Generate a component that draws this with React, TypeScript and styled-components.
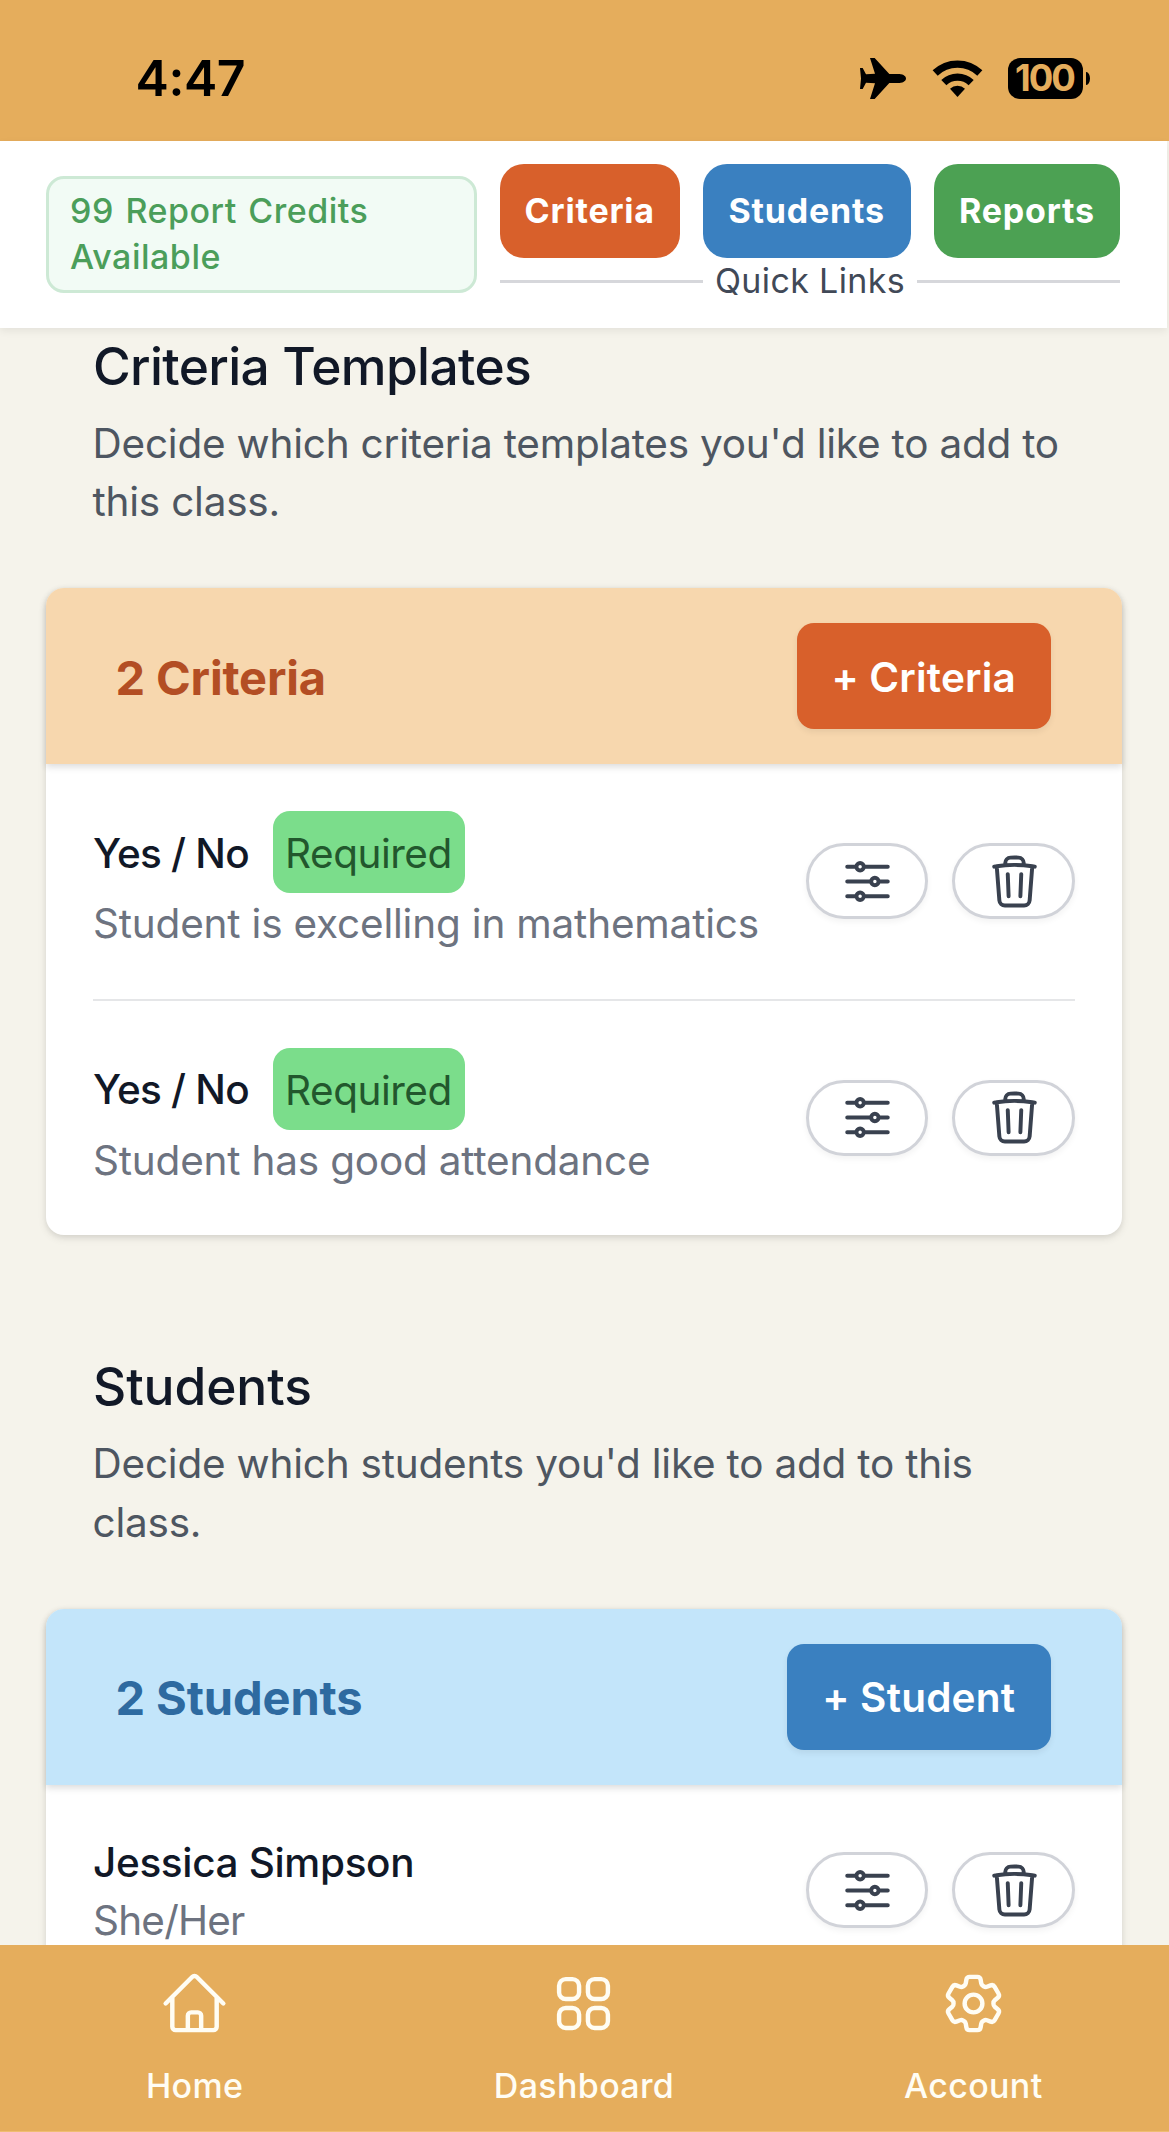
import React from "react";
import styled, { createGlobalStyle } from "styled-components";
import {
  HiOutlineAdjustmentsHorizontal,
  HiOutlineCog6Tooth,
  HiOutlineHome,
  HiOutlineSquares2X2,
  HiOutlineTrash,
} from "react-icons/hi2";

const GlobalStyle = createGlobalStyle`
  *, *::before, *::after { box-sizing: border-box; }
  body {
    margin: 0;
    background: #f5f3eb;
    font-family: Inter, "Liberation Sans", sans-serif;
    font-size: 40.5px;
  }
  h2, h3, p { margin: 0; }
  button { font-family: inherit; border: 0; padding: 0; }
`;

const Screen = styled.div`
  display: flex;
  flex-direction: column;
  width: 1169px;
  height: 2132px;
  overflow: hidden;
`;

const StatusBar = styled.div`
  flex: none;
  height: 141px;
  padding: 15px 79px 0 135.5px;
  display: flex;
  align-items: center;
  justify-content: space-between;
  background: #e5ad5c;
`;

const Clock = styled.span`
  font-size: 50px;
  font-weight: 600;
  letter-spacing: -0.4px;
  color: #000;
`;

const StatusIcons = styled.div`
  display: flex;
  align-items: center;
`;

const PlaneIcon = styled.svg`
  width: 46px;
  height: 41px;
  margin-right: 26px;
`;

const WifiIcon = styled.svg`
  width: 51px;
  height: 37px;
  margin-right: 25px;
`;

const Battery = styled.div`
  width: 75px;
  height: 41px;
  border-radius: 12px;
  background: #000;
  color: #e5ad5c;
  font-size: 36.5px;
  font-weight: 700;
  letter-spacing: -2px;
  line-height: 41px;
  text-align: center;
  text-indent: -2px;
`;

const BatteryNub = styled.div`
  width: 4px;
  height: 13px;
  margin-left: 3px;
  border-radius: 0 4px 4px 0 / 0 7px 7px 0;
  background: #000;
`;

const Header = styled.header`
  flex: none;
  position: relative;
  z-index: 1;
  height: 186.5px;
  margin-right: 2px;
  padding: 0 47px 0 46px;
  display: flex;
  align-items: center;
  gap: 23.5px;
  background: #fff;
  box-shadow: 0 3px 8px rgba(0, 0, 0, 0.07);
`;

const Credits = styled.div`
  flex: 1;
  height: 117.5px;
  padding: 9px 21px;
  border: 3px solid #cde9d5;
  border-radius: 18px;
  background: #f2fbf5;
  color: #4b9e5a;
  font-size: 34px;
  font-weight: 500;
  letter-spacing: 0.5px;
  word-spacing: 2px;
  line-height: 46.7px;
`;

const Links = styled.div`
  width: 620px;
`;

const LinkButtons = styled.div`
  display: flex;
  justify-content: space-between;
`;

const LinkButton = styled.button<{ $width: number; $color: string }>`
  width: ${(p) => p.$width}px;
  height: 94px;
  border-radius: 24px;
  background: ${(p) => p.$color};
  color: #fff;
  font-size: 34px;
  font-weight: 700;
  letter-spacing: 0.8px;
`;

const LinksCaption = styled.div`
  height: 47px;
  display: flex;
  align-items: center;
  gap: 12px;
  color: #414957;
  font-size: 34px;
  letter-spacing: 0.35px;
  white-space: nowrap;

  &::before,
  &::after {
    content: "";
    flex: 1;
    height: 3px;
    background: #d6d7db;
  }

  span {
    height: 47px;
    line-height: 45px;
  }
`;

const Main = styled.main`
  flex: 1;
  min-height: 0;
  overflow: hidden;
  padding: 10px 47.5px 0 46px;
`;

const Section = styled.section`
  margin-bottom: 123px;
`;

const Title = styled.h2<{ $tracking: number }>`
  padding-left: 47px;
  color: #111827;
  font-size: 51.5px;
  font-weight: 500;
  letter-spacing: ${(p) => p.$tracking}px;
  line-height: 56px;
`;

const Description = styled.p`
  margin: 21px 0 56.5px;
  padding: 0 40px 0 46.5px;
  color: #4e5661;
  letter-spacing: -0.22px;
  line-height: 58.7px;
`;

const Card = styled.div`
  border-radius: 18px;
  background: #fff;
  box-shadow: 0 3px 9px rgba(0, 0, 0, 0.1), 0 2px 5px rgba(0, 0, 0, 0.05);
`;

const CardHeader = styled.div<{ $background: string; $color: string }>`
  height: 175.5px;
  padding: 0 70.5px 0 69.5px;
  display: flex;
  align-items: center;
  justify-content: space-between;
  border-radius: 18px 18px 0 0;
  background: ${(p) => p.$background};
  color: ${(p) => p.$color};
  box-shadow: 0 3px 7px rgba(0, 0, 0, 0.14);
`;

const CardTitle = styled.h3<{ $tracking: number }>`
  padding-top: 2px;
  font-size: 47px;
  font-weight: 700;
  letter-spacing: ${(p) => p.$tracking}px;
`;

const AddButton = styled.button<{ $width: number; $color: string }>`
  width: ${(p) => p.$width}px;
  height: 105.5px;
  padding-top: 2px;
  border-radius: 17px;
  background: ${(p) => p.$color};
  color: #fff;
  font-size: 40.5px;
  font-weight: 600;
  letter-spacing: 0.2px;
  box-shadow: 0 3px 6px rgba(0, 0, 0, 0.07);
`;

const Rows = styled.div`
  padding: 0 47px;
`;

const Row = styled.div`
  padding: 47px 0;
  display: flex;
  align-items: center;
  justify-content: space-between;

  & + & {
    border-top: 2.7px solid #e5e6e8;
  }
`;

const RowHead = styled.div`
  display: flex;
  align-items: center;
  gap: 24px;
`;

const RowName = styled.span<{ $tracking: number }>`
  height: 58.6px;
  color: #111827;
  font-weight: 500;
  letter-spacing: ${(p) => p.$tracking}px;
  line-height: 61.6px;
`;

const RowDetail = styled.p<{ $tracking: number }>`
  height: 58.6px;
  color: #6d7380;
  letter-spacing: ${(p) => p.$tracking}px;
  line-height: 61.6px;
  white-space: nowrap;
`;

const Badge = styled.span`
  width: 192px;
  height: 82px;
  border-radius: 17px;
  background: #7bdd8b;
  color: #22572d;
  letter-spacing: -0.5px;
  line-height: 85px;
  text-align: center;
  text-indent: -1px;
`;

const Actions = styled.div`
  display: flex;
  gap: 24px;
`;

const ActionButton = styled.button`
  width: 122.5px;
  height: 76px;
  display: flex;
  align-items: center;
  justify-content: center;
  padding-left: 2px;
  border: 3px solid #d1d3d9;
  border-radius: 38px;
  background: #fff;
  color: #39414f;
  box-shadow: 0 3px 6px rgba(0, 0, 0, 0.05);

  svg {
    stroke-width: 1.6;
  }
`;

const Nav = styled.nav`
  flex: none;
  height: 187px;
  padding: 22.5px 1px 0 0;
  display: grid;
  grid-template-columns: repeat(3, 1fr);
  border-bottom: 1px solid #f0bd72;
  background: #e5ad5c;
`;

const NavItem = styled.a`
  display: flex;
  flex-direction: column;
  align-items: center;
  gap: 23px;
  color: #fffdf4;
  font-size: 34px;
  font-weight: 500;
  letter-spacing: 0.35px;
  line-height: 47px;
`;

function RowActions() {
  return (
    <Actions>
      <ActionButton aria-label="Edit">
        <HiOutlineAdjustmentsHorizontal size={59} />
      </ActionButton>
      <ActionButton aria-label="Delete">
        <HiOutlineTrash size={59} />
      </ActionButton>
    </Actions>
  );
}

const criteria = ["Student is excelling in mathematics", "Student has good attendance"];
const students = [{ name: "Jessica Simpson", pronouns: "She/Her" }];

export default function App() {
  return (
    <Screen>
      <GlobalStyle />
      <StatusBar>
        <Clock>4:47</Clock>
        <StatusIcons>
          <PlaneIcon viewBox="0 0 138 123">
            <path d="M0 30H8L18 49L45 47L30 0H44L88 48H118C132 49 138 56 138 61.500C138 67 132 74 118 75H88L44 123H30L45 76L18 74L8 93H0L3 61.500Z" />
          </PlaneIcon>
          <WifiIcon viewBox="0 0 150 111" fill="none" stroke="#000" strokeWidth="22">
            <path d="M8 39A97 97 0 0 1 142 39M34 68A59 59 0 0 1 116 68" />
            <path d="M75 111L52.500 86A33 33 0 0 1 97.500 86Z" fill="#000" stroke="none" />
          </WifiIcon>
          <Battery>100</Battery>
          <BatteryNub />
        </StatusIcons>
      </StatusBar>

      <Header>
        <Credits>99 Report Credits Available</Credits>
        <Links>
          <LinkButtons>
            <LinkButton $width={179.5} $color="#d8602b">Criteria</LinkButton>
            <LinkButton $width={208} $color="#3a80c0">Students</LinkButton>
            <LinkButton $width={186} $color="#4ca153">Reports</LinkButton>
          </LinkButtons>
          <LinksCaption>
            <span>Quick Links</span>
          </LinksCaption>
        </Links>
      </Header>

      <Main>
        <Section>
          <Title $tracking={-0.65}>Criteria Templates</Title>
          <Description>
            Decide which criteria templates you'd like to add to this class.
          </Description>
          <Card>
            <CardHeader $background="#f7d7ae" $color="#b34e24">
              <CardTitle $tracking={-0.15}>2 Criteria</CardTitle>
              <AddButton $width={254.5} $color="#d8602b">+ Criteria</AddButton>
            </CardHeader>
            <Rows>
              {criteria.map((text) => (
                <Row key={text}>
                  <div>
                    <RowHead>
                      <RowName $tracking={-0.75}>Yes / No</RowName>
                      <Badge>Required</Badge>
                    </RowHead>
                    <RowDetail $tracking={-0.2}>{text}</RowDetail>
                  </div>
                  <RowActions />
                </Row>
              ))}
            </Rows>
          </Card>
        </Section>

        <Section>
          <Title $tracking={-0.1}>Students</Title>
          <Description>Decide which students you'd like to add to this class.</Description>
          <Card>
            <CardHeader $background="#c3e5fa" $color="#2e6aa0">
              <CardTitle $tracking={-0.1}>2 Students</CardTitle>
              <AddButton $width={264.5} $color="#3a80c0">+ Student</AddButton>
            </CardHeader>
            <Rows>
              {students.map((s) => (
                <Row key={s.name}>
                  <div>
                    <RowHead>
                      <RowName $tracking={-0.35}>{s.name}</RowName>
                    </RowHead>
                    <RowDetail $tracking={-0.8}>{s.pronouns}</RowDetail>
                  </div>
                  <RowActions />
                </Row>
              ))}
            </Rows>
          </Card>
        </Section>
      </Main>

      <Nav>
        <NavItem>
          <HiOutlineHome size={71} />
          Home
        </NavItem>
        <NavItem>
          <HiOutlineSquares2X2 size={71} />
          Dashboard
        </NavItem>
        <NavItem>
          <HiOutlineCog6Tooth size={71} />
          Account
        </NavItem>
      </Nav>
    </Screen>
  );
}
